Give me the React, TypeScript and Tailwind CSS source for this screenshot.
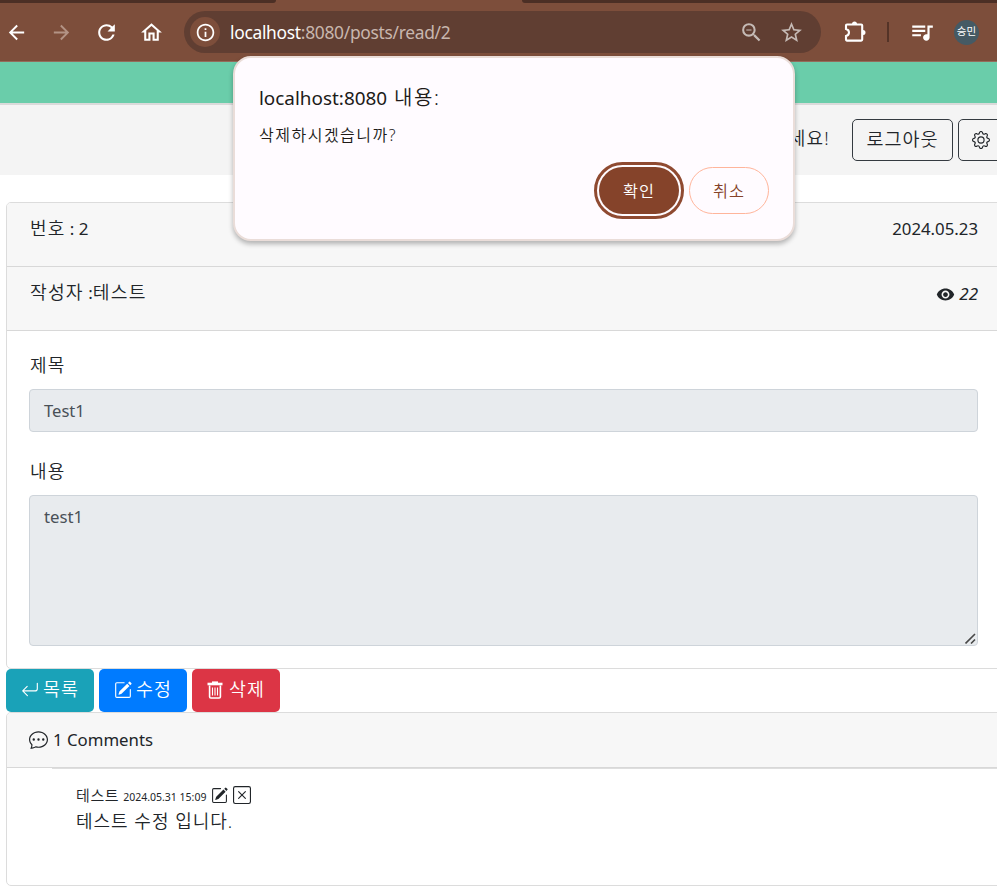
import React from "react";
import { BsArrowReturnLeft, BsPencilSquare, BsChatDots, BsXSquare, BsGear } from "react-icons/bs";
import {
  MdArrowBack,
  MdArrowForward,
  MdRefresh,
  MdOutlineHome,
  MdInfoOutline,
  MdZoomOut,
  MdStarBorder,
  MdQueueMusic,
  MdVisibility,
} from "react-icons/md";

function TrashIcon() {
  return (
    <svg className="h-[18px] w-[16px]" viewBox="0 0 16 18" fill="none" stroke="currentColor">
      <path d="M0.5 3h15" strokeWidth="2.6" />
      <path d="M5 1.2h6" strokeWidth="1.6" />
      <path d="M2.6 4.5v11.2q0 1.3 1.3 1.3h8.2q1.3 0 1.3-1.3V4.5" strokeWidth="1.6" />
      <path d="M5.5 6.5v8M8 6.5v8M10.5 6.5v8" strokeWidth="1.1" />
    </svg>
  );
}

function ExtensionIcon() {
  return (
    <svg className="ml-[23px] h-[22px] w-[22px] shrink-0" viewBox="0 0 22 22">
      <path
        d="M3 3.5H17.2Q18.2 3.5 18.2 4.5V18.6Q18.2 19.6 17.2 19.6H3Q2 19.6 2 18.6V15C6 14 6 9 2 8V4.5Q2 3.5 3 3.5Z"
        fill="none"
        stroke="currentColor"
        strokeWidth="2.1"
      />
      <path d="M8 3a2.5 2.5 0 0 1 5 0zM19 8.9a2.5 2.5 0 0 1 0 5z" fill="currentColor" />
    </svg>
  );
}

function Toolbar() {
  return (
    <div className="flex h-[59px] shrink-0 items-center border-b border-[#946c5c] bg-[#7d4e3b] text-white">
      <MdArrowBack className="ml-[5px] size-[23px] shrink-0" />
      <MdArrowForward className="ml-[22px] size-[23px] shrink-0 text-[#b39385]" />
      <MdRefresh className="ml-[21px] size-[25px] shrink-0" />
      <MdOutlineHome className="ml-[20px] size-[25px] shrink-0" />
      <div className="ml-5 flex h-[42px] w-[637px] shrink-0 items-center rounded-full bg-[#603e32]">
        <span className="ml-[6px] flex size-[30px] items-center justify-center rounded-full bg-[#7d4e3b]">
          <MdInfoOutline className="size-[21px]" />
        </span>
        <span className="ml-[10px] text-[17.4px] font-normal tracking-[-0.3px] whitespace-nowrap text-[#c8b6ae]">
          <span className="text-white">localhost</span>:8080/posts/read/2
        </span>
        <MdZoomOut className="ml-auto size-[25px] text-[#c5bab5]" />
        <MdStarBorder className="mr-[17px] ml-[15px] size-[25px] text-[#c5bab5]" />
      </div>
      <ExtensionIcon />
      <span className="ml-[21px] h-5 w-[2px] shrink-0 bg-[#543327]" />
      <MdQueueMusic className="ml-[20px] size-[26px] shrink-0" />
      <span className="ml-[19px] flex size-[25px] shrink-0 items-center justify-center rounded-full bg-[#455a64] text-[10.5px] font-normal">
        승민
      </span>
    </div>
  );
}

function SiteHeader() {
  return (
    <header className="flex h-[70px] shrink-0 items-start justify-end bg-[#f4f4f4] pt-[14px]">
      <span className="mt-[7px] mr-[22px] text-[18px] leading-6 tracking-[1.2px]">세요!</span>
      <button className="h-[42px] w-[101px] rounded-[5px] border border-[#343a40] pb-[2px] text-[18.5px] tracking-[1px]">
        로그아웃
      </button>
      <button className="-mr-[6px] ml-[5px] flex h-[42px] w-[45px] items-center justify-center rounded-[5px] border border-[#343a40]">
        <BsGear className="size-[18px]" />
      </button>
    </header>
  );
}

function PostCard() {
  return (
    <section className="ml-[6px] flex h-[467px] w-[1010px] shrink-0 flex-col rounded-[5px] border border-[#dcdcdc]">
      <div className="flex h-[64px] items-start justify-between rounded-t-[4px] border-b border-[#d8d8d8] bg-[#f7f7f7] pr-[37px] pl-[23px]">
        <span className="mt-[13px] text-[18px] leading-6 tracking-[1.1px]">
          번호<span className="text-[17px] font-normal tracking-normal"> : 2</span>
        </span>
        <span className="mt-[14px] text-[16.8px] leading-6 font-normal">2024.05.23</span>
      </div>
      <div className="flex h-[64px] items-start justify-between border-b border-[#d8d8d8] bg-[#f7f7f7] pr-[37px] pl-[23px]">
        <span className="mt-[13px] text-[18.2px] leading-6 tracking-[1.2px]">
          작성자<span className="text-[17px] font-normal tracking-normal"> :</span>테스트
        </span>
        <span className="mt-[15px] flex items-center gap-[4px] text-[17px] leading-6 font-normal italic">
          <MdVisibility className="size-[19px]" />
          22
        </span>
      </div>
      <div className="flex flex-col pl-[22px]">
        <label className="mt-[22px] ml-[1px] text-[18px] leading-6 tracking-[1.3px]">제목</label>
        <div className="mt-[12px] flex h-[43px] w-[949px] items-center rounded-[4px] border border-[#ced4da] bg-[#e8ebee] px-[14px] pt-[2px] text-[16.6px] font-normal text-[#495057]">
          Test1
        </div>
        <label className="mt-[27px] ml-[1px] text-[18px] leading-6 tracking-[1.3px]">내용</label>
        <div className="mt-[12px] flex h-[151px] w-[949px] justify-between rounded-[4px] border border-[#ced4da] bg-[#e8ebee] pl-[14px] text-[16.8px] leading-6 font-normal text-[#495057]">
          <span className="mt-[9px]">test1</span>
          <svg className="mr-[1px] mb-[1px] size-[11px] self-end" viewBox="0 0 11 11" stroke="#484848" strokeWidth="1.6">
            <path d="M0.5 10.5L10 1M6 10.5L10 6.5" />
          </svg>
        </div>
      </div>
    </section>
  );
}

const actionClass =
  "flex h-[43px] w-[88px] items-center justify-center gap-[4px] rounded-[5px] pb-[2px] text-[18.4px] tracking-[1px] text-white";

function Actions() {
  return (
    <div className="ml-[6px] flex h-[43px] shrink-0 gap-[5px]">
      <button className={actionClass + " bg-[#1aa2b8]"}>
        <BsArrowReturnLeft className="size-[18px]" />
        <span className="-mt-px">목록</span>
      </button>
      <button className={actionClass + " bg-[#007bff]"}>
        <BsPencilSquare className="size-[18px]" />
        <span className="-mt-px">수정</span>
      </button>
      <button className={actionClass + " bg-[#dc3545]"}>
        <TrashIcon />
        <span className="-mt-px ml-[2px]">삭제</span>
      </button>
    </div>
  );
}

function Comments() {
  return (
    <section className="ml-[6px] h-[174px] w-[1010px] shrink-0 rounded-[5px] border border-[#dcdcdc]">
      <div className="flex h-[55px] items-center rounded-t-[4px] border-b border-[#d8d8d8] bg-[#f7f7f7] pl-[22px]">
        <BsChatDots className="mb-[2px] size-[19px]" />
        <span className="ml-[5px] text-[16.8px] font-normal">1 Comments</span>
      </div>
      <div className="ml-[45px] border-t border-[#dedede] pt-[15px] pl-[24px]">
        <div className="flex h-[22px] items-center">
          <span className="text-[15px] tracking-[0.6px]">테스트</span>
          <span className="mt-[6px] ml-[4px] text-[10.5px] font-normal">2024.05.31 15:09</span>
          <BsPencilSquare className="ml-[5px] size-[17px]" />
          <BsXSquare className="ml-[5px] size-[18px]" />
        </div>
        <div className="mt-[3px] text-[18px] leading-6 tracking-[1px]">테스트 수정 입니다.</div>
      </div>
    </section>
  );
}

function ConfirmDialog() {
  return (
    <div className="absolute top-[56px] left-[233px] flex h-[185px] w-[562px] flex-col rounded-[18px] border-2 border-[#eaddd9] bg-[#fffbff] shadow-[0_3px_5px_rgba(0,0,0,0.28)]">
      <h1 className="mt-[26px] ml-[24px] text-[18.9px] leading-7 font-normal text-[#201a18]">
        localhost:8080 <span className="ml-[2px] text-[20px] font-[350] tracking-[1.6px]">내용:</span>
      </h1>
      <p className="mt-[12px] ml-[24px] text-[16px] leading-[22px] tracking-[1.5px] text-[#201a18]">삭제하시겠습니까?</p>
      <div className="mt-[16px] mr-[24px] flex items-center justify-end gap-[5px]">
        <div className="rounded-full border-[3px] border-[#8f4a31] p-[2px]">
          <button className="block h-[47px] w-[80px] rounded-full bg-[#85432a] pt-[1px] text-[16.3px] tracking-[1px] text-white">
            확인
          </button>
        </div>
        <button className="h-[47px] w-[80px] rounded-full border border-[#ffb59b] pt-[1px] text-[16.3px] tracking-[1px] text-[#85432a]">
          취소
        </button>
      </div>
    </div>
  );
}

export default function App() {
  return (
    <div className="relative flex h-[886px] w-[997px] flex-col overflow-hidden bg-white font-['Noto_Sans','Noto_Sans_CJK_KR',sans-serif] font-[350] text-[#212529]">
      <div className="flex h-[3px] shrink-0 justify-between bg-[#7d4e3b]">
        <span className="h-[3px] w-[276px] rounded-br-[8px] bg-[#4c2f25]" />
        <span className="h-[3px] w-[475px] rounded-bl-[8px] bg-[#4c2f25]" />
      </div>
      <Toolbar />
      <div className="h-[43px] shrink-0 border-b-2 border-[#dadada] bg-[#6acdaa]" />
      <SiteHeader />
      <div className="h-[27px] shrink-0" />
      <PostCard />
      <Actions />
      <Comments />
      <ConfirmDialog />
    </div>
  );
}
